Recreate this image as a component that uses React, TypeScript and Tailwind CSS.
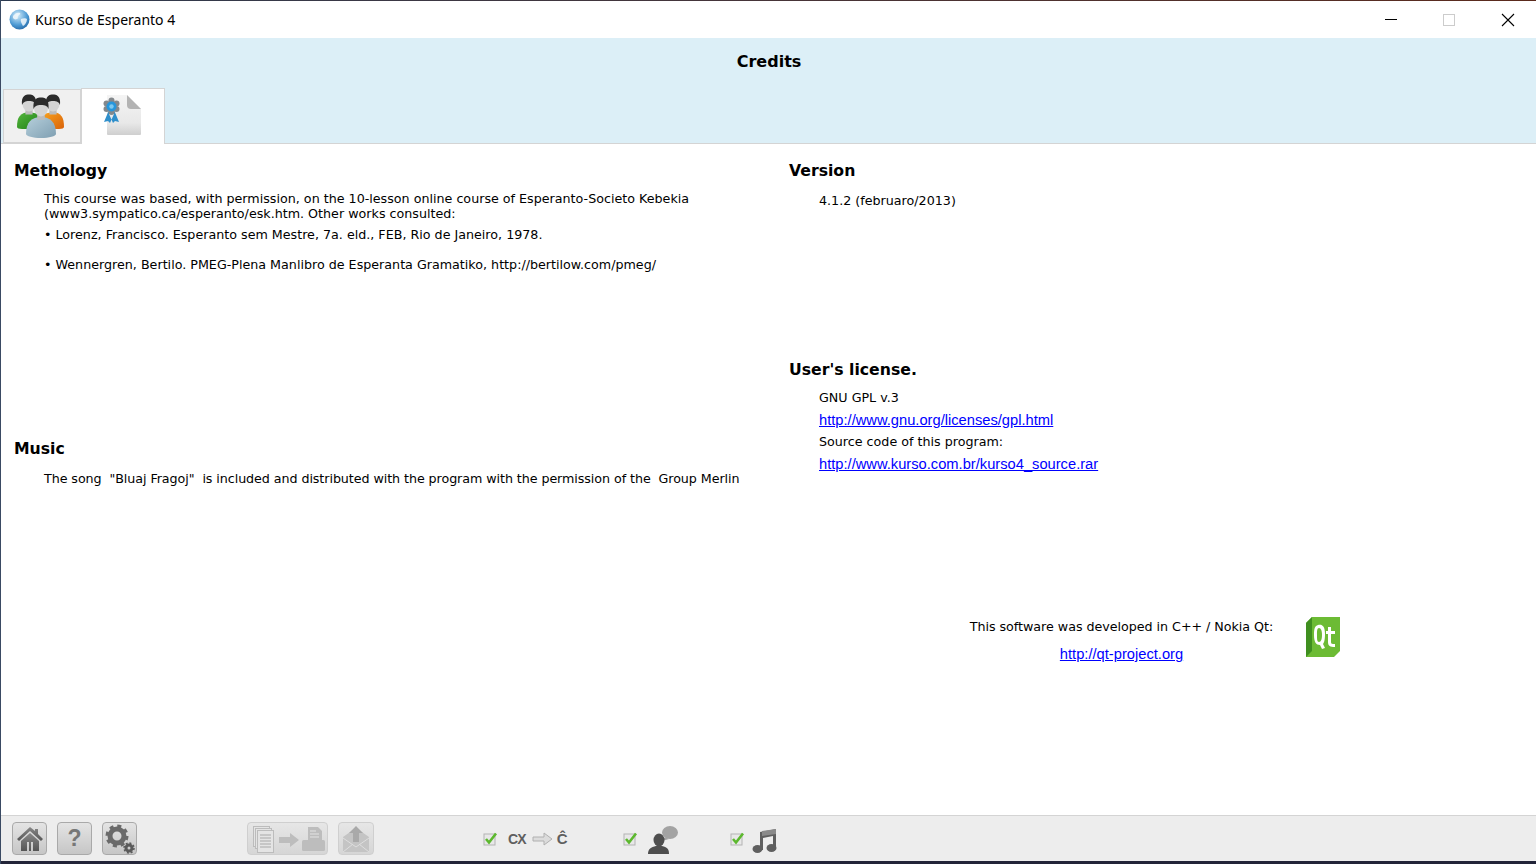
import React from "react";

const sans = "font-['DejaVu_Sans',sans-serif]";

function Globe() {
  return (
    <svg width="21" height="21" viewBox="0 0 21 21">
      <defs>
        <radialGradient id="gl" cx="0.4" cy="0.3" r="0.8">
          <stop offset="0" stopColor="#d6eefb" />
          <stop offset="0.6" stopColor="#4d9ad4" />
          <stop offset="1" stopColor="#1d5f9e" />
        </radialGradient>
      </defs>
      <circle cx="10.5" cy="10.5" r="10" fill="url(#gl)" />
      <path d="M4 7c2-3 5-4 7-3 1 1-1 2-2 3s1 2-1 3-3 0-4-1zM12 10c2-1 5-1 6 0 0 3-2 6-4 7-1-2-3-5-2-7z" fill="#f2f8fc" opacity="0.85" />
    </svg>
  );
}

function Person({ cx, hy, rx, ry, body, id, c1, c2 }: { cx: number; hy: number; rx: number; ry: number; body: string; id: string; c1: string; c2: string }) {
  return (
    <g>
      <defs>
        <linearGradient id={id} x1="0" y1="0" x2="1" y2="1">
          <stop offset="0" stopColor={c1} />
          <stop offset="1" stopColor={c2} />
        </linearGradient>
      </defs>
      <path d={body} fill={`url(#${id})`} />
      <rect x={cx - rx * 0.55} y={hy + ry * 0.6} width={rx * 1.1} height={ry * 0.8} fill="#bcbcbc" />
      <ellipse cx={cx} cy={hy} rx={rx} ry={ry} fill="#d4d4d4" />
      <path d={`M${cx - rx - 0.5} ${hy + 1}c-1-${ry + 2} ${rx * 0.6}-${ry + 3} ${rx + 0.5}-${ry + 3}s${rx + 1.5} 1 ${rx + 0.5} ${ry + 3}c-1-3-3-4-${rx + 0.5}-4s-${rx - 1} 1-${rx + 0.5} 4z`} fill="#2b2b2b" />
    </g>
  );
}

function People() {
  return (
    <svg width="50" height="46" viewBox="0 0 50 46">
      <Person id="p1" cx={13} hy={11} rx={6.5} ry={7.5} c1="#56b83e" c2="#1f7f17" body="M1 34c0-10 3-14 12-15l10 2v15H6c-3 0-5-1-5-2z" />
      <Person id="p2" cx={37} hy={11} rx={6.5} ry={7.5} c1="#f8a21f" c2="#d9630a" body="M27 21l10-2c8 1 11 5 11 15 0 1-2 2-5 2H27z" />
      <Person id="p3" cx={25} hy={15} rx={7} ry={8.5} c1="#b6cfdb" c2="#7f9fb2" body="M10 41c0-12 6-17 15-17s15 5 15 17c0 2-7 4-15 4s-15-2-15-4z" />
    </svg>
  );
}

function Certificate() {
  return (
    <svg width="42" height="44" viewBox="0 0 42 44">
      <defs>
        <linearGradient id="pg" x1="0" y1="0" x2="0" y2="1">
          <stop offset="0" stopColor="#f4f4f4" />
          <stop offset="0.7" stopColor="#e8e8e8" />
          <stop offset="1" stopColor="#cfcfcf" />
        </linearGradient>
      </defs>
      <path d="M6 1h20l14 14v25a1 1 0 0 1-1 1H7a1 1 0 0 1-1-1z" fill="url(#pg)" />
      <path d="M26 1l14 14h-10a4 4 0 0 1-4-4z" fill="#b3b3b3" />
      <g transform="translate(3 0)">
        <path d="M5 16L0 28l4-1 2 2 4-9zM10 16l5 12-4-1-2 2-4-9z" fill="#2f8fcb" />
        <g fill="#83888c">
          <circle cx="7.5" cy="6.5" r="3" />
          <circle cx="12.5" cy="9.5" r="3" />
          <circle cx="12.5" cy="15" r="3" />
          <circle cx="7.5" cy="18" r="3" />
          <circle cx="2.5" cy="15" r="3" />
          <circle cx="2.5" cy="9.5" r="3" />
        </g>
        <circle cx="7.5" cy="12.5" r="5" fill="#2696dc" />
        <circle cx="7.5" cy="12.5" r="2.2" fill="#7cc8f0" />
      </g>
    </svg>
  );
}

function QtLogo() {
  return (
    <svg width="34" height="42" viewBox="0 0 34 42">
      <path d="M6 1h28v34l-6 6H0V7z" fill="#6cbb34" />
      <path d="M0 7l6-6v34l-6 6z" fill="#3f8f1f" />
      <path d="M12 9c4-1 7 1 7 9 0 6-1 9-2 10l2 4-3 1-2-4c-4 0-6-3-6-10 0-7 1-9 4-10zm1 3c-2 0-2 3-2 7s0 7 2 7 3-3 3-7-1-7-3-7z" fill="#fff" />
      <path d="M22 11h3v4h4v3h-4v8c0 2 1 2 4 2v3c-5 0-7-1-7-5v-8h-2v-3h2z" fill="#fff" />
    </svg>
  );
}

function IconButton({ children, className }: { children: React.ReactNode; className: string }) {
  return (
    <div className={`flex h-[33px] items-center justify-center rounded-[4px] border border-[#a9a9a9] bg-gradient-to-b from-[#e4e4e4] to-[#c6c6c6] ${className}`}>
      {children}
    </div>
  );
}

function Check() {
  return (
    <svg width="15" height="15" viewBox="0 0 15 15">
      <rect x="1" y="3" width="11" height="11" fill="#e8e8e8" stroke="#b4b4b4" />
      <path d="M3 8l3 3.5 7-9" fill="none" stroke="#5cb82e" strokeWidth="2.6" />
    </svg>
  );
}

function H({ children }: { children: React.ReactNode }) {
  return <h2 className="text-[15.7px] leading-[20px] font-bold text-black">{children}</h2>;
}

function A({ href, children }: { href: string; children: React.ReactNode }) {
  return (
    <a href={href} className="font-['Liberation_Sans',sans-serif] text-[14.7px] leading-[22px] text-[#0000ff] underline">
      {children}
    </a>
  );
}

export default function App() {
  return (
    <div className={`flex h-[864px] w-[1536px] flex-col overflow-hidden border-l border-l-[#3a4a63] bg-white ${sans}`}>
      <div className="h-px shrink-0 bg-gradient-to-r from-[#2c3a50] to-[#5b2a1c]" />
      <header className="flex h-[37px] shrink-0 items-center bg-white">
        <div className="ml-[8px]"><Globe /></div>
        <span className="ml-[5px] font-['Noto_Sans',sans-serif] text-[14px] text-black">Kurso de Esperanto 4</span>
        <div className="ml-auto flex items-center">
          <svg width="58" height="30" viewBox="0 0 58 30"><path d="M23 14.5h12" stroke="#000" strokeWidth="1" /></svg>
          <svg width="58" height="30" viewBox="0 0 58 30"><rect x="23.5" y="9.5" width="11" height="11" fill="none" stroke="#cccccc" /></svg>
          <svg width="58" height="30" viewBox="0 0 58 30"><path d="M24 9l12 12M36 9L24 21" stroke="#000" strokeWidth="1.1" /></svg>
        </div>
      </header>
      <div className="relative h-[106px] shrink-0 border-b border-b-[#d4d4d4] bg-[#dceff7]">
        <h1 className="pt-[14px] pl-[1px] text-center text-[16px] leading-[20px] font-bold text-black">Credits</h1>
        <div className="absolute top-[50px] left-[2px] flex items-end">
          <div className="flex h-[54px] w-[78px] items-center justify-center border border-[#d4d4d4] bg-[#f0f0f0] pr-[2px]"><People /></div>
          <div className="-mb-px flex h-[56px] w-[84px] justify-center border border-b-0 border-[#d4d4d4] bg-white pt-[5px] pr-[2px]"><Certificate /></div>
        </div>
      </div>

      <main className="grid min-h-0 flex-1 grid-cols-[774px_1fr] text-[12.7px] text-black">
        <section className="pt-[17px] pl-[13px]">
          <H>Methology</H>
          <div className="mt-[10px] pl-[30px] leading-[15px]">
            <p>This course was based, with permission, on the 10-lesson online course of Esperanto-Societo Kebekia<br />(www3.sympatico.ca/esperanto/esk.htm. Other works consulted:</p>
            <p className="mt-[6px]">• Lorenz, Francisco. Esperanto sem Mestre, 7a. eld., FEB, Rio de Janeiro, 1978.</p>
            <p className="mt-[15px]">• Wennergren, Bertilo. PMEG-Plena Manlibro de Esperanta Gramatiko, http://bertilow.com/pmeg/</p>
          </div>
          <div className="mt-[167px]">
            <H>Music</H>
            <p className="mt-[12px] pl-[30px] leading-[15px] tracking-[-0.07px] whitespace-pre">The song  "Bluaj Fragoj"  is included and distributed with the program with the permission of the  Group Merlin</p>
          </div>
        </section>
        <section className="pt-[17px] pl-[14px]">
          <H>Version</H>
          <p className="mt-[12px] pl-[30px] leading-[15px]">4.1.2 (februaro/2013)</p>
          <div className="mt-[152px]">
            <H>User's license.</H>
            <div className="mt-[7px] flex flex-col items-start pl-[30px] leading-[21px]">
              <p className="leading-[22px]">GNU GPL v.3</p>
              <A href="#">http://www.gnu.org/licenses/gpl.html</A>
              <p>Source code of this program:</p>
              <div className="mt-px"><A href="#">http://www.kurso.com.br/kurso4_source.rar</A></div>
            </div>
          </div>
          <div className="mt-[141px] ml-[181px] flex items-start">
            <div className="flex w-[303px] flex-col items-center">
              <p className="leading-[22px] tracking-[-0.03px] whitespace-nowrap">This software was developed in C++ / Nokia Qt:</p>
              <div className="mt-[5px]"><A href="#">http://qt-project.org</A></div>
            </div>
            <div className="ml-[33px]"><QtLogo /></div>
          </div>
        </section>
      </main>

      <footer className="flex h-[46px] shrink-0 items-center border-t border-t-[#d4d4d4] bg-[#ededed] pl-[11px]">
        <IconButton className="w-[35px]">
          <svg width="28" height="27" viewBox="0 0 28 27"><defs><linearGradient id="hg" x1="0" y1="0" x2="0" y2="1"><stop offset="0" stopColor="#888888" /><stop offset="1" stopColor="#555555" /></linearGradient></defs><path d="M14 2L1 14l2 2L14 6l11 10 2-2-5-5V4h-3v2z" fill="url(#hg)" /><path d="M5 16l9-8 9 8v10h-6v-9h-2v9h-2v-9h-2v9H5z" fill="url(#hg)" /></svg>
        </IconButton>
        <IconButton className="ml-[10px] w-[35px]"><span className="font-['Liberation_Sans',sans-serif] text-[23px] font-bold text-[#777777]">?</span></IconButton>
        <IconButton className="ml-[10px] w-[35px]">
          <svg width="30" height="30" viewBox="0 0 30 30">
            <circle cx="12" cy="12" r="7" fill="none" stroke="#6a6a6a" strokeWidth="5" />
            <circle cx="12" cy="12" r="10" fill="none" stroke="#6a6a6a" strokeWidth="3" strokeDasharray="4 3.85" />
            <circle cx="24" cy="24" r="3" fill="none" stroke="#5a5a5a" strokeWidth="3" />
            <circle cx="24" cy="24" r="5" fill="none" stroke="#5a5a5a" strokeWidth="1.5" strokeDasharray="2 1.9" />
          </svg>
        </IconButton>
        <div className="ml-[110px] flex h-[33px] w-[81px] items-center justify-center rounded-[4px] border border-[#cfcfcf] bg-gradient-to-b from-[#e6e6e6] to-[#d6d6d6]">
          <svg width="76" height="30" viewBox="0 0 76 30">
            <g fill="#e4e4e4" stroke="#bcbcbc"><rect x="3.5" y="2.5" width="16" height="20" /><rect x="5.5" y="4.5" width="16" height="20" /><rect x="7.5" y="6.5" width="16" height="22" /></g>
            <path d="M10 11h11M10 14h11M10 17h11M10 20h11M10 23h11" stroke="#bcbcbc" strokeWidth="1.5" />
            <path d="M29 13h11V9l9 7-9 7v-4H29z" fill="#bdbdbd" />
            <path d="M58 3h10l4 4v10H58z" fill="#bdbdbd" />
            <path d="M60 7h6M60 10h9M60 13h9" stroke="#e4e4e4" />
            <rect x="52" y="16" width="23" height="11" rx="1.5" fill="#bdbdbd" />
          </svg>
        </div>
        <div className="ml-[10px] flex h-[33px] w-[36px] items-center justify-center rounded-[4px] border border-[#cfcfcf] bg-gradient-to-b from-[#e6e6e6] to-[#d6d6d6]">
          <svg width="30" height="30" viewBox="0 0 30 30">
            <path d="M2 13l13-9 13 9v15H2z" fill="#c4c4c4" />
            <path d="M15 2l7 7h-4v9h-6V9H8z" fill="#a9a9a9" />
            <path d="M2 14l13 9 13-9M2 28l10-8M28 28l-10-8" fill="none" stroke="#dedede" />
          </svg>
        </div>
        <div className="ml-[109px] flex items-center">
          <Check />
          <span className="mt-[2px] ml-[10px] font-['Liberation_Sans',sans-serif] text-[14px] font-bold tracking-[-0.8px] text-[#5f5f5f]">CX</span>
          <svg className="ml-[6px]" width="21" height="14" viewBox="0 0 21 14"><path d="M1 5h11V1l8 6-8 6V9H1z" fill="#dcdcdc" stroke="#b0b0b0" /></svg>
          <span className="mt-[2px] ml-[4px] font-['Liberation_Sans',sans-serif] text-[15px] font-bold text-[#5f5f5f]">Ĉ</span>
        </div>
        <div className="ml-[55px] flex items-center">
          <Check />
          <svg className="mt-[2px] ml-[9px]" width="32" height="30" viewBox="0 0 32 30">
            <ellipse cx="23" cy="7.5" rx="8" ry="6.5" fill="#a3a3a3" /><path d="M18 12l-3 4 7-2z" fill="#a3a3a3" />
            <ellipse cx="12" cy="15" rx="5.5" ry="6.5" fill="#4e4e4e" /><path d="M1 29c0-5 3-7 8-8h6c5 1 7 3 7 8z" fill="#4e4e4e" />
          </svg>
        </div>
        <div className="ml-[51px] flex items-center">
          <Check />
          <svg className="mt-[4px] ml-[7px]" width="26" height="26" viewBox="0 0 26 26">
            <path d="M8 4l16-3v19h-3V8L11 10v12H8z" fill="#5f5f5f" /><path d="M10 3l14-2v5L10 8z" fill="#8a8a8a" />
            <ellipse cx="5.5" cy="21" rx="5" ry="4" fill="#5f5f5f" /><ellipse cx="19.5" cy="20" rx="5" ry="4" fill="#5f5f5f" />
          </svg>
        </div>
      </footer>
      <div className="h-[3px] shrink-0 bg-[#222438]" />
    </div>
  );
}
